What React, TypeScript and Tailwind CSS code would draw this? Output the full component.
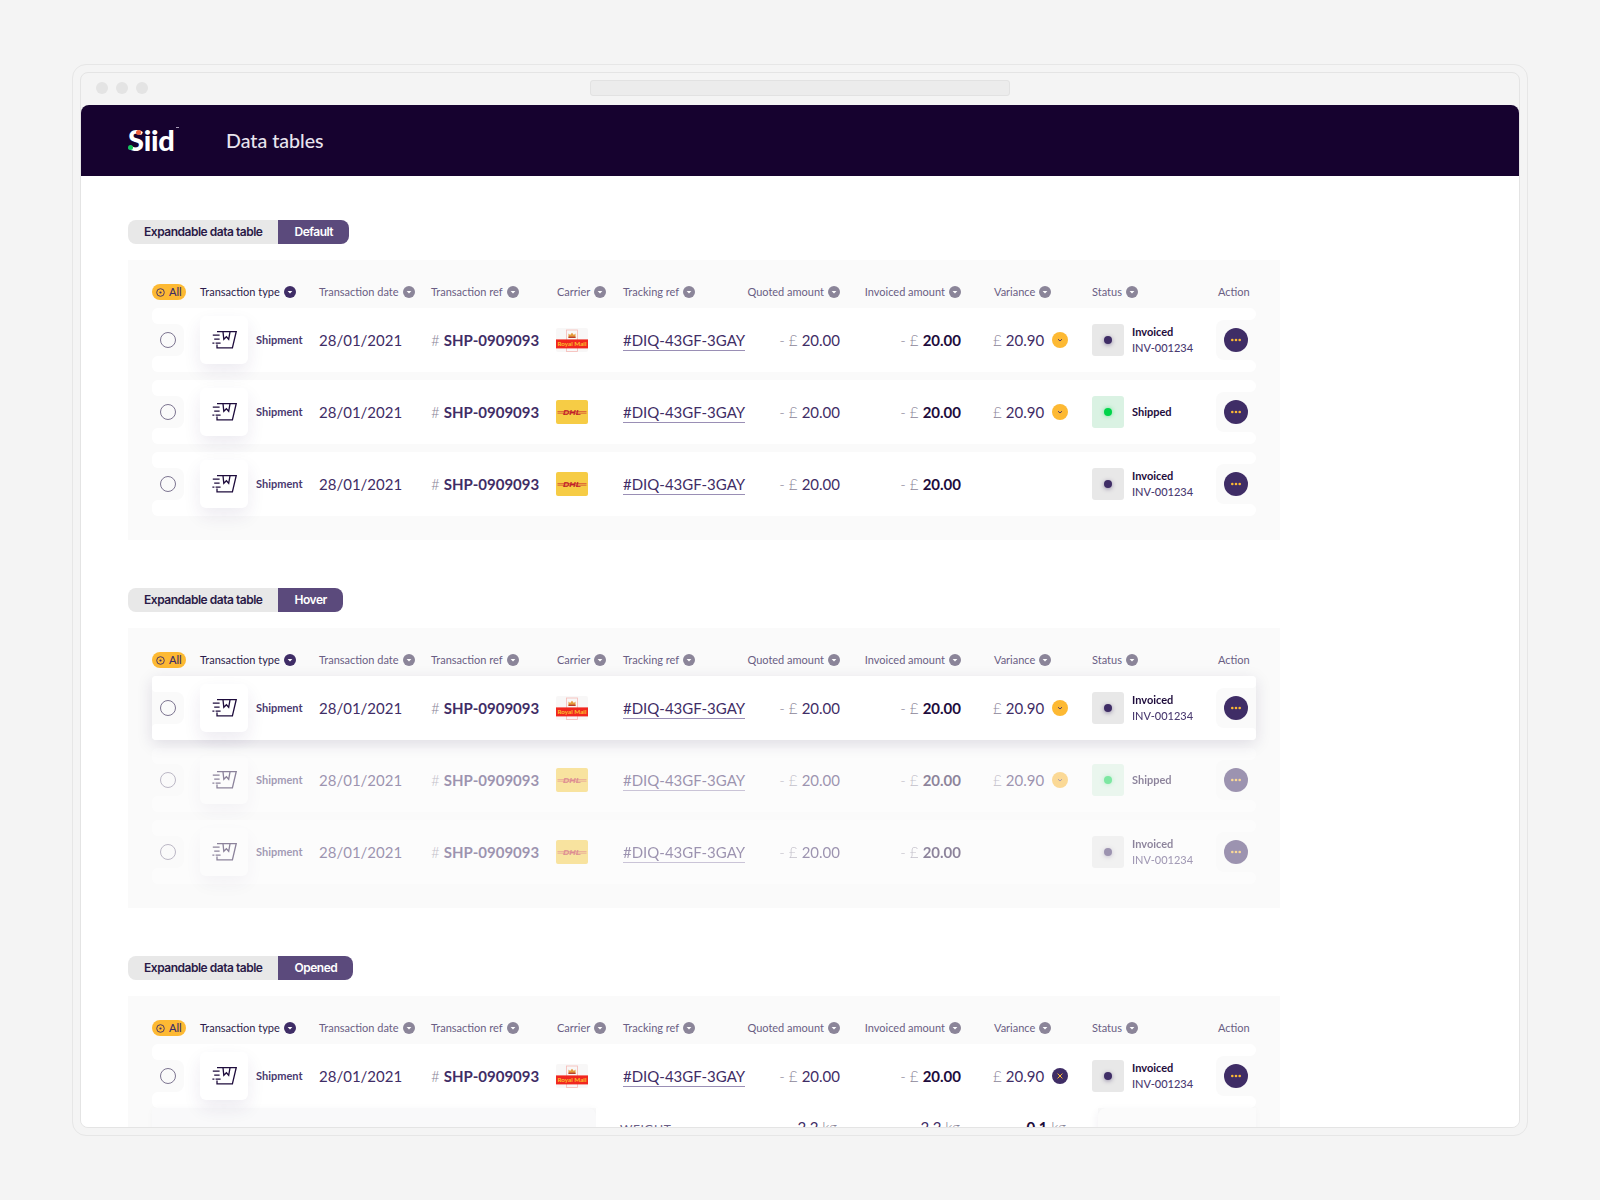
import React from "react";

const COLS = "grid grid-cols-[135px_112px_125px_67px_122px_95px_120px_132px_124px]";

type Carrier = "royal" | "dhl";
type Status = "invoiced" | "shipped";

interface RowData {
  carrier: Carrier;
  status: Status;
  variance: boolean;
}

const ROWS: RowData[] = [
  { carrier: "royal", status: "invoiced", variance: true },
  { carrier: "dhl", status: "shipped", variance: true },
  { carrier: "dhl", status: "invoiced", variance: false },
];

function SortDot({ active = false }: { active?: boolean }) {
  return (
    <svg width="12" height="12" viewBox="0 0 12 12" className="ml-1 shrink-0">
      <circle cx="6" cy="6" r="6" fill={active ? "#3f2d66" : "#8b8599"} />
      <path d="M3.6 5h4.8L6 7.6z" fill="#fff" />
    </svg>
  );
}

function HeadLabel({ text, active = false, className = "" }: { text: string; active?: boolean; className?: string }) {
  return (
    <div className={`flex items-center ${className}`}>
      <span className={active ? "text-[#2c1b4b]" : "text-[#6a5e84]"}>{text}</span>
      <SortDot active={active} />
    </div>
  );
}

function ShipmentIcon() {
  return (
    <svg width="25" height="18" viewBox="0 0 25 18" fill="none" stroke="#1e0c3c" strokeWidth="1.3">
      <path d="M5 .7H24.2L20.4 16.8H5V13.5" />
      <path d="M11 .8L11.8 8.3 14.4 5.8 16.7 8.3 18 .8" />
      <path d="M.8 4.2H7.6M2.2 8.2H7.6M.4 12.2H2.4M3.6 12.2H8.6" />
    </svg>
  );
}

function RoyalMailLogo() {
  return (
    <svg width="32" height="24" viewBox="0 0 32 24">
      <rect width="32" height="24" rx="2" fill="#f8f7f7" />
      <rect x="10.5" y="2" width="11" height="21.5" fill="none" stroke="#f6b9b5" strokeWidth="0.8" />
      <rect y="11.4" width="32" height="9" fill="#f1261f" />
      <path d="M12.5 5.5l1.6 1.5L16 4.8l1.9 2.2 1.6-1.5V10h-7z" fill="#e59a3a" />
      <rect x="12.5" y="8.6" width="7" height="1.4" fill="#b8402d" />
      <text x="1.5" y="18.2" textLength="29" lengthAdjust="spacingAndGlyphs" fontFamily="Lato, sans-serif" fontWeight="700" fontSize="6" fill="#fbc02b">
        Royal Mail
      </text>
    </svg>
  );
}

function DhlLogo() {
  return (
    <svg width="32" height="24" viewBox="0 0 32 24">
      <rect width="32" height="24" rx="2" fill="#f6cc45" />
      <path d="M1.5 11.6h29M1.5 13.2h29" stroke="#c9202c" strokeWidth="0.6" />
      <text x="7" y="15" textLength="18" lengthAdjust="spacingAndGlyphs" fontFamily="Liberation Sans, sans-serif" fontStyle="italic" fontWeight="700" fontSize="7" fill="#c01f2a">
        DHL
      </text>
    </svg>
  );
}

function VarianceBadge({ open }: { open: boolean }) {
  return (
    <svg width="16" height="16" viewBox="0 0 16 16" className="ml-2 shrink-0">
      <circle cx="8" cy="8" r="8" fill={open ? "#3f2d66" : "#fdb933"} />
      {open ? (
        <path d="M5.6 5.6l4.8 4.8M10.4 5.6l-4.8 4.8" stroke="#fdb933" strokeWidth="1" fill="none" />
      ) : (
        <path d="M6 7.2L8 9l2-1.8" stroke="#3f2d66" strokeWidth="0.9" fill="none" />
      )}
    </svg>
  );
}

function Money({ value, strong = false }: { value: string; strong?: boolean }) {
  return (
    <div className={`text-right text-[15px] whitespace-nowrap ${strong ? "-mr-px" : ""}`}>
      <span className="font-light text-[#8b8599]">- £ </span>
      <span className={strong ? "font-bold text-[#1e0c3c]" : "text-[#3f2d66]"}>{value}</span>
    </div>
  );
}

function TableRow({ row, open = false, lifted = false, dim = false }: { row: RowData; open?: boolean; lifted?: boolean; dim?: boolean }) {
  const radius = lifted ? "rounded-l-[4px]" : "rounded-l-[6px]";
  const radiusRight = lifted ? "rounded-r-[4px]" : "rounded-r-[6px]";

  return (
    <div
      className={`flex h-16 ${lifted ? "relative z-20 rounded-[4px] shadow-[0_4px_16px_rgba(40,20,80,0.13)]" : ""} ${dim ? "opacity-50" : ""}`}
    >
      <div className="flex w-8 flex-col">
        <div className={`h-4 bg-white ${radius}`} />
        <div className="bg-white">
          <div className="flex h-8 w-8 items-center justify-center rounded-r-lg bg-[#fafafa]">
            <span className="h-4 w-4 rounded-full border border-[#7d7591]" />
          </div>
        </div>
        <div className={`h-4 bg-white ${radius}`} />
      </div>

      <div className={`${COLS} items-center bg-white`}>
        <div className="flex items-center pl-4">
          <div className="relative z-10 flex h-12 w-12 items-center justify-center rounded-md bg-white shadow-[0_8px_18px_rgba(60,30,100,0.09)]">
            <ShipmentIcon />
          </div>
          <span className="ml-2 text-[11px] font-bold text-[#4a3a70]">Shipment</span>
        </div>
        <div className="text-[15px] text-[#3f2d66]">28/01/2021</div>
        <div className="text-[15px] whitespace-nowrap">
          <span className="font-light text-[#8b8599]"># </span>
          <span className="font-bold text-[#3f2d66]">SHP-0909093</span>
        </div>
        <div>{row.carrier === "royal" ? <RoyalMailLogo /> : <DhlLogo />}</div>
        <div>
          <span className="inline-block border-b border-[#9a8fb5] text-[15px] leading-[20px] whitespace-nowrap text-[#3f2d66]">
            #DIQ-43GF-3GAY
          </span>
        </div>
        <Money value="20.00" />
        <Money value="20.00" strong />
        <div className="flex items-center pl-[33px] text-[15px] whitespace-nowrap">
          {row.variance && (
            <>
              <span className="font-light text-[#8b8599]">£&nbsp;</span>
              <span className="text-[#3f2d66]">20.90</span>
              <VarianceBadge open={open} />
            </>
          )}
        </div>
        <div className="flex items-center">
          <div
            className={`flex h-8 w-8 items-center justify-center rounded-[3px] ${row.status === "shipped" ? "bg-[#daf2e3]" : "bg-[#e8e8e8]"}`}
          >
            <span
              className={`h-2 w-2 rounded-full ${row.status === "shipped" ? "bg-[#00d44a] shadow-[0_0_4px_rgba(0,212,74,0.5)]" : "bg-[#3f2d66] shadow-[0_1px_4px_rgba(63,45,102,0.5)]"}`}
            />
          </div>
          <div className="ml-2 text-[11px] leading-4">
            {row.status === "shipped" ? (
              <div className="font-bold text-[#1e0c3c]">Shipped</div>
            ) : (
              <>
                <div className="font-bold text-[#1e0c3c]">Invoiced</div>
                <div className="font-medium text-[#4a3a70]">INV-001234</div>
              </>
            )}
          </div>
        </div>
      </div>

      <div className="flex w-10 flex-col">
        <div className={`h-3 bg-white ${radiusRight}`} />
        <div className="bg-white">
          <div className="flex h-10 w-10 items-center justify-center rounded-l-lg bg-[#fafafa]">
            <svg width="24" height="24" viewBox="0 0 24 24">
              <circle cx="12" cy="12" r="12" fill="#3f2d66" />
              <circle cx="8.3" cy="12" r="1.3" fill="#fdb933" />
              <circle cx="12" cy="12" r="1.3" fill="#fdb933" />
              <circle cx="15.7" cy="12" r="1.3" fill="#fdb933" />
            </svg>
          </div>
        </div>
        <div className={`h-3 bg-white ${radiusRight}`} />
      </div>
    </div>
  );
}

function Expanded() {
  return (
    <div className="flex h-[120px]">
      <div className="w-[444px] rounded-tr-lg bg-[#f9f9fa] shadow-[2px_2px_8px_rgba(40,20,80,0.05)]" />
      <div className="flex w-[502px] bg-white pt-[7px] pl-6 text-[15px] leading-6 text-[#3f2d66]">
        <div className="w-[125px] pt-0.5 text-xs leading-6 tracking-[0.05em] text-[#6a5e84]">WEIGHT</div>
        <div className="w-[92px] text-right">
          2.2 <span className="font-light text-[#8b8599]">kg</span>
        </div>
        <div className="w-[123px] text-right">
          2.2 <span className="font-light text-[#8b8599]">kg</span>
        </div>
        <div className="w-[106px] text-right font-bold text-[#1e0c3c]">
          0.1 <span className="font-light text-[#8b8599]">kg</span>
        </div>
      </div>
      <div className="flex-1 rounded-tl-lg bg-[#fbfbfb] shadow-[-2px_2px_8px_rgba(40,20,80,0.05)]" />
    </div>
  );
}

function TableSection({ state }: { state: "Default" | "Hover" | "Opened" }) {
  const rows = state === "Opened" ? ROWS.slice(0, 1) : ROWS;

  return (
    <section className="mb-12">
      <div className="flex h-6 w-fit overflow-hidden rounded-lg font-['Inter',sans-serif] text-xs font-semibold tracking-[-0.04em]">
        <div className="flex items-center bg-[#e8e8e8] px-4 text-[#2a1a47]">Expandable data table</div>
        <div className="flex items-center bg-[#5b4a7c] px-4 text-white">{state}</div>
      </div>

      <div className="mt-4 w-[1152px] bg-[#fafafa] px-6 pt-6 pb-6">
        <div className="mb-2 flex h-4 items-center text-[11px]">
          <div className="w-8">
            <div className="flex h-4 w-[34px] items-center gap-1 rounded-full bg-[#fdb933] pl-1 text-[11px] font-medium text-[#3f2d66]">
              <svg width="9" height="9" viewBox="0 0 9 9" fill="none" className="shrink-0">
                <circle cx="4.5" cy="4.5" r="3.8" stroke="#3f2d66" strokeWidth="0.9" />
                <circle cx="4.5" cy="4.5" r="1.1" fill="#3f2d66" />
              </svg>
              All
            </div>
          </div>
          <div className={`${COLS} items-center`}>
            <HeadLabel text="Transaction type" active className="pl-4" />
            <HeadLabel text="Transaction date" />
            <HeadLabel text="Transaction ref" />
            <HeadLabel text="Carrier" className="pl-px" />
            <HeadLabel text="Tracking ref" />
            <HeadLabel text="Quoted amount" className="justify-end" />
            <HeadLabel text="Invoiced amount" className="-mr-px justify-end" />
            <HeadLabel text="Variance" className="pl-[34px]" />
            <HeadLabel text="Status" />
          </div>
          <div className="w-10 pl-0.5 text-[#6a5e84]">Action</div>
        </div>

        <div className="flex flex-col gap-2">
          {rows.map((row, i) => (
            <TableRow key={i} row={row} open={state === "Opened"} lifted={state === "Hover" && i === 0} dim={state === "Hover" && i > 0} />
          ))}
        </div>

        {state === "Opened" && <Expanded />}
      </div>
    </section>
  );
}

export default function App() {
  return (
    <div className="h-[1200px] w-[1600px] overflow-hidden bg-[#f4f4f4] pt-16 pl-[72px] font-['Lato',sans-serif]">
      <div className="h-[1072px] w-[1456px] rounded-[14px] border border-[#e6e6e6] p-[7px]">
        <div className="flex h-full flex-col overflow-hidden rounded-lg border border-[#e4e4e4]">
          <div className="flex h-8 shrink-0 items-center pb-0.5 pl-[15px]">
            <div className="flex gap-2">
              <span className="h-3 w-3 rounded-full bg-[#e4e4e4]" />
              <span className="h-3 w-3 rounded-full bg-[#e4e4e4]" />
              <span className="h-3 w-3 rounded-full bg-[#e4e4e4]" />
            </div>
            <div className="ml-[442px] h-4 w-[420px] rounded-[3px] border border-[#e2e2e2] bg-[#ececec]" />
          </div>

          <header className="flex h-[71px] shrink-0 items-center rounded-t-lg bg-[#16022f] pb-[3px] pl-[47px]">
            <div className="relative w-[98px] text-[29px] leading-none font-black tracking-[-0.01em] text-white">
              Siid
              <span className="absolute top-[5px] left-[8px] h-[5px] w-[5px] rounded-full bg-[#f0603c]" />
              <span className="absolute top-[20px] left-0 h-[5px] w-[5px] rounded-full bg-[#14c45c]" />
              <span className="absolute top-[2px] left-[48px] h-px w-[3px] bg-[#a99fb8]" />
            </div>
            <h1 className="mt-1 text-[19.6px] font-medium text-[#e8e4ee]">Data tables</h1>
          </header>

          <main className="flex-1 overflow-hidden bg-white px-[47px] pt-11">
            <TableSection state="Default" />
            <TableSection state="Hover" />
            <TableSection state="Opened" />
          </main>
        </div>
      </div>
    </div>
  );
}
